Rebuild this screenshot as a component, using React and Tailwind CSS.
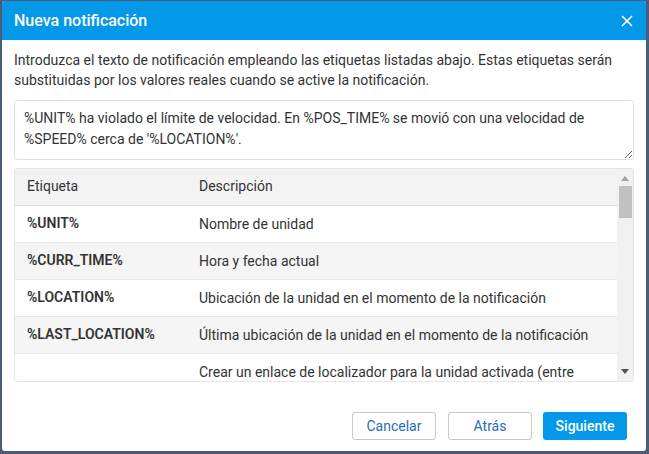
import React from "react";

const rows = [
  { tag: "%UNIT%", desc: "Nombre de unidad" },
  { tag: "%CURR_TIME%", desc: "Hora y fecha actual" },
  { tag: "%LOCATION%", desc: "Ubicación de la unidad en el momento de la notificación" },
  { tag: "%LAST_LOCATION%", desc: "Última ubicación de la unidad en el momento de la notificación" },
  {
    tag: "%LOCATOR_LINK(60,T)%",
    desc: "Crear un enlace de localizador para la unidad activada (entre paréntesis, indique el período de vida útil del enlace en horas y los datos a mostrar: T - trazado, G - geocercas)",
  },
];

const App = () => {
  return (
    <div
      className="w-[649px] h-[454px] bg-[#4b5b78] pt-px pl-[2px] pr-[3px] pb-[3px]"
      style={{ fontFamily: "Roboto, 'Liberation Sans', sans-serif" }}
    >
      <div className="h-full bg-white rounded-[3px] overflow-hidden flex flex-col">
        {/* Header */}
        <div className="h-[39px] bg-[#0399e8] flex items-center justify-between pl-[12px] pr-[12px] shrink-0">
          <h1 className="text-white text-[16px] font-medium">Nueva notificación</h1>
          <svg width="12" height="12" viewBox="0 0 12 12" className="mr-px">
            <path d="M1 1L11 11M11 1L1 11" stroke="white" strokeWidth="1.6" />
          </svg>
        </div>

        <div className="flex-1 flex flex-col px-[12px] pt-[10px]">
          <p className="text-[14px] leading-[20px] text-[#333]">
            Introduzca el texto de notificación empleando las etiquetas listadas abajo. Estas etiquetas serán
            substituidas por los valores reales cuando se active la notificación.
          </p>

          <textarea
            className="mt-[10px] h-[60px] w-full border border-[#e0e0e0] rounded-[3px] px-[9px] pt-[7px] pb-[5px] text-[14px] leading-[21px] text-[#333] resize-y outline-none"
            defaultValue="%UNIT% ha violado el límite de velocidad. En %POS_TIME% se movió con una velocidad de %SPEED% cerca de '%LOCATION%'."
          />

          {/* Tags table with scrollbar */}
          <div className="mt-[8px] h-[214px] border border-[#e6e6e6] rounded-[3px] overflow-hidden flex">
            <div className="flex-1 overflow-hidden">
              <table className="w-full border-collapse text-[14px] text-[#333]">
                <thead>
                  <tr className="bg-[#f3f3f3] border-b border-[#e0e0e0]">
                    <th className="h-[36px] w-[184px] pl-[12px] text-left font-normal">Etiqueta</th>
                    <th className="h-[36px] text-left font-normal">Descripción</th>
                  </tr>
                </thead>
                <tbody>
                  {rows.map((r, i) => (
                    <tr
                      key={r.tag}
                      className={`border-b border-[#e6e6e6] ${i % 2 === 1 ? "bg-[#f5f5f5]" : "bg-white"}`}
                    >
                      <td className="h-[37px] pl-[12px] font-semibold align-middle">{r.tag}</td>
                      <td className="py-[9px] pr-[12px] leading-[18px] align-top">{r.desc}</td>
                    </tr>
                  ))}
                </tbody>
              </table>
            </div>
            <div className="w-[16px] bg-[#f1f1f1] flex flex-col items-center shrink-0">
              <svg width="8" height="5" viewBox="0 0 8 5" className="mt-[7px]">
                <path d="M0 5L4 0L8 5Z" fill="#a3a3a3" />
              </svg>
              <div className="mt-[5px] w-[13px] h-[32px] bg-[#c1c1c1]" />
              <svg width="8" height="5" viewBox="0 0 8 5" className="mt-auto mb-[7px]">
                <path d="M0 0L8 0L4 5Z" fill="#505050" />
              </svg>
            </div>
          </div>

          <div className="mt-auto mb-[11px] flex justify-end pr-[7px]">
            <button className="w-[84px] h-[28px] border border-[#c8c8c8] rounded-[3px] text-[14px] text-[#2a6db3] bg-white">
              Cancelar
            </button>
            <button className="ml-[12px] w-[84px] h-[28px] border border-[#c8c8c8] rounded-[3px] text-[14px] text-[#2a6db3] bg-white">
              Atrás
            </button>
            <button className="ml-[11px] w-[84px] h-[28px] rounded-[3px] text-[14px] font-medium text-white bg-[#0399e8]">
              Siguiente
            </button>
          </div>
        </div>
      </div>
    </div>
  );
};

export default App;
